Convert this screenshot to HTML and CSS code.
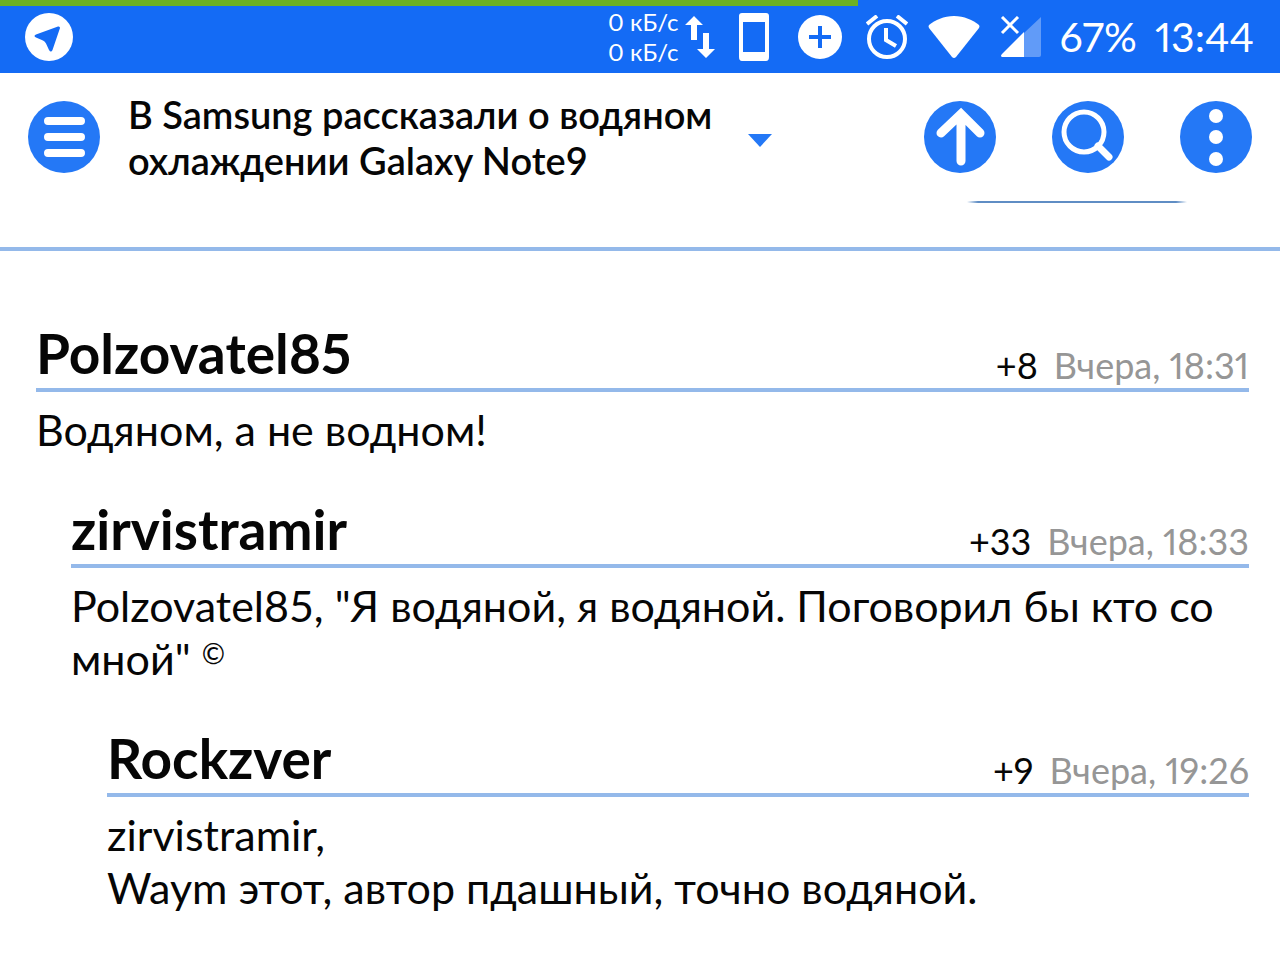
FILE: index.html
```
<!DOCTYPE html>
<html lang="ru">
	<head>
		<meta charset="UTF-8">
		<meta name="viewport" content="width=device-width">
		<title>В Samsung рассказали о водяном охлаждении Galaxy Note9</title>
		<link rel="stylesheet" href="styles.css">
	</head>
	<body>
		<div class="status">
			<div class="battery"></div>
			<svg class="telegram" width="50" height="50" viewBox="0 0 50 50"><circle cx="25" cy="25" r="24" fill="#fff"/><path d="M34 14.500 12 22.500q-3 1.500 0 3l7 3q2 1 3 3l3 6.500q2 3 3.500 0L36 16q0-2-2-1.500z" fill="#146bf5"/></svg>
			<div class="speed">
				<span>0 кБ/с</span>
				<span>0 кБ/с</span>
			</div>
			<svg class="arrows" width="30" height="44" viewBox="0 0 30 44"><path d="M9 1 18 10H12V25H6V10H0zM18 18h6V34h6L21 43 12 34h6z" fill="#fff"/></svg>
			<svg class="phone" width="32" height="50" viewBox="0 0 32 50"><path fill-rule="evenodd" d="M4 1H28q3 0 3 3V45q0 4-3 4H4q-3 0-3-4V4q0-3 3-3zM5 10V40H27V10z" fill="#fff"/></svg>
			<svg class="plus" width="44" height="44" viewBox="0 0 44 44"><circle cx="22" cy="22" r="22" fill="#fff"/><path d="M22 11V33M11 22H33" stroke="#146bf5" stroke-width="4"/></svg>
			<svg class="alarm" width="42" height="44" viewBox="0 0 42 44"><g fill="none" stroke="#fff" stroke-width="4"><circle cx="21" cy="24" r="18"/><path d="M1 9 11 1M31 1 41 9M20 13V25L30 31" stroke-width="4"/></g></svg>
			<svg class="wifi" width="52" height="44" viewBox="0 0 52 44"><path d="M26 1C16 1 7 5 1 10q-1 1 0 3L24 42q2 2 4 0L51 13q1-2 0-3C45 5 36 1 26 1z" fill="#fff"/></svg>
			<svg class="signal" width="42" height="42" viewBox="0 0 42 42"><path d="M41 1V39q0 2-2 2H24V17z" fill="#fff" opacity=".33"/><path d="M24 16V41H2q-2-1 0-3z" fill="#fff"/><path d="M2 1 18 17M18 1 2 17" stroke="#fff" stroke-width="3"/></svg>
			<span class="percent">67%</span>
			<span class="clock">13:44</span>
		</div>

		<header class="toolbar">
			<button class="round" aria-label="Меню">
				<svg viewBox="0 0 72 72"><path d="M20 20H53M20 36H53M20 52H53" stroke="#fff" stroke-width="8" stroke-linecap="round"/></svg>
			</button>
			<h1>В Samsung рассказали о водяном охлаждении Galaxy Note9</h1>
			<button class="drop" aria-label="Выбрать"><svg width="24" height="13" viewBox="0 0 24 13"><path d="M0 0H24L12 13z" fill="#2478f6"/></svg></button>
			<div class="actions">
				<button class="round" aria-label="Наверх">
					<svg viewBox="0 0 72 72"><path d="M37 60V14M17 32 37 13 56 32" fill="none" stroke="#fff" stroke-width="9" stroke-linecap="round"/></svg>
				</button>
				<button class="round" aria-label="Поиск">
					<svg viewBox="0 0 72 72" fill="none" stroke="#fff"><circle cx="32" cy="31" r="20" stroke-width="5"/><path d="M46 45 57 56" stroke-width="7" stroke-linecap="round"/></svg>
				</button>
				<button class="round" aria-label="Ещё">
					<svg viewBox="0 0 72 72" fill="#fff"><circle cx="36" cy="15" r="7"/><circle cx="36" cy="36" r="7"/><circle cx="36" cy="58" r="7"/></svg>
				</button>
			</div>
		</header>
		<!-- нижний край кнопки под шапкой -->
		<div class="edge"></div>

		<main class="comments">
			<article class="comment">
				<div class="head">
					<h2>Polzovatel85</h2>
					<span class="rate">+8</span>
					<time>Вчера, 18:31</time>
				</div>
				<p>Водяном, а не водном!</p>
			</article>
			<article class="comment level1">
				<div class="head">
					<h2>zirvistramir</h2>
					<span class="rate">+33</span>
					<time>Вчера, 18:33</time>
				</div>
				<p>Polzovatel85, "Я водяной, я водяной. Поговорил бы кто со мной" <span class="copy">©</span></p>
			</article>
			<article class="comment level2">
				<div class="head">
					<h2>Rockzver</h2>
					<span class="rate">+9</span>
					<time>Вчера, 19:26</time>
				</div>
				<p>zirvistramir,<br>Waym этот, автор пдашный, точно водяной.</p>
			</article>
		</main>
	</body>
</html>
```
FILE: styles.css
```
*{
	margin: 0;
	padding: 0;
	box-sizing: border-box;
}
body{
	background: #fff;
	color: #060606;
	font-family: Lato, "Open Sans", sans-serif;
}
button{
	border: 0;
	background: none;
	cursor: pointer;
}
svg{
	display: block;
	flex: none;
}
.status{
	position: relative;
	display: flex;
	align-items: center;
	height: 73px;
	padding: 0 26px 0 24px;
	background: #146bf5;
	color: #fff;
	font-size: 41px;
	font-variant-numeric: proportional-nums;
}
/* полоска заряда */
.battery{
	position: absolute;
	top: 0;
	left: 0;
	width: 67%;
	height: 6px;
	background: #6cb023;
}
.telegram{
	margin-right: auto;
}
.speed{
	font-size: 24px;
	line-height: 30px;
}
.speed span{
	display: block;
}
.arrows{
	margin: 0 23px 0 6px;
}
.phone{
	margin-right: 28px;
}
.plus{
	margin-right: 24px;
}
.alarm{
	margin-right: 20px;
}
.wifi{
	margin-right: 20px;
}
.signal{
	margin-right: 18px;
}
.percent{
	margin-right: 18px;
}
.toolbar{
	display: flex;
	align-items: center;
	height: 128px;
	padding: 0 28px;
}
.round{
	width: 72px;
	height: 72px;
	flex: none;
	border-radius: 50%;
	background: #2478f6;
}
h1{
	width: 592px;
	margin-left: 28px;
	font-size: 38px;
	line-height: 46px;
	font-weight: 600;
}
.drop{
	margin-left: 28px;
	padding-top: 6px;
}
.actions{
	display: flex;
	gap: 56px;
	margin-left: auto;
}
.edge{
	height: 50px;
	border-bottom: 4px solid #94b9ea;
}
.edge::before{
	content: "";
	display: block;
	width: 220px;
	height: 2px;
	margin-left: auto;
	margin-right: 93px;
	background: linear-gradient(90deg, transparent, #5f8dc4 5%, #5f8dc4 95%, transparent);
}
.comments{
	padding: 30px 31px 0 36px;
}
.comment{
	padding-top: 36px;
}
.level1{
	margin-left: 35px;
}
.level2{
	margin-left: 71px;
}
.head{
	display: flex;
	align-items: flex-end;
	height: 75px;
	border-bottom: 4px solid #94b9ea;
	font-size: 36px;
	line-height: 46px;
	font-variant-numeric: proportional-nums;
}
h2{
	margin-right: auto;
	font-size: 55px;
	line-height: 70px;
	font-weight: 700;
}
.rate{
	margin-right: 16px;
}
time{
	color: #969696;
}
p{
	padding-top: 11px;
	padding-bottom: 1px;
	font-size: 43px;
	line-height: 53px;
}
.copy{
	display: inline-block;
	font-size: 28px;
	line-height: 28px;
	vertical-align: 11px;
}
```
